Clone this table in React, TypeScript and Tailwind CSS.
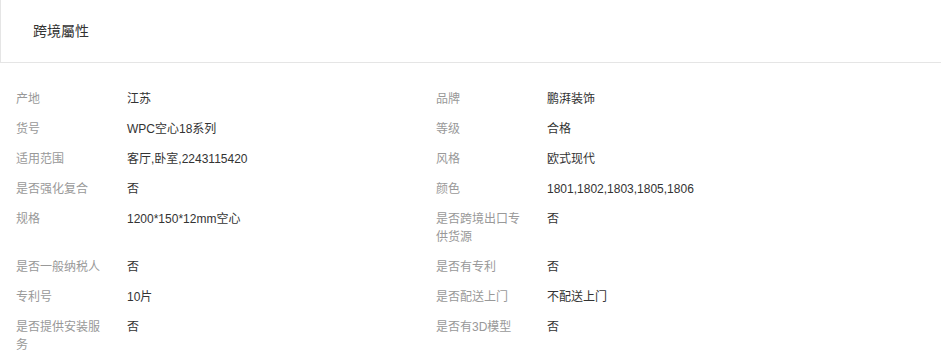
const rows: [string, string][] = [
  ["产地", "江苏"],
  ["品牌", "鹏湃装饰"],
  ["货号", "WPC空心18系列"],
  ["等级", "合格"],
  ["适用范围", "客厅,卧室,2243115420"],
  ["风格", "欧式现代"],
  ["是否强化复合", "否"],
  ["颜色", "1801,1802,1803,1805,1806"],
  ["规格", "1200*150*12mm空心"],
  ["是否跨境出口专供货源", "否"],
  ["是否一般纳税人", "否"],
  ["是否有专利", "否"],
  ["专利号", "10片"],
  ["是否配送上门", "不配送上门"],
  ["是否提供安装服务", "否"],
  ["是否有3D模型", "否"],
];

export default function App() {
  return (
    <div
      className="w-[941px] h-[358px] bg-white overflow-hidden"
      style={{ fontFamily: '"Liberation Sans", "Noto Sans CJK SC", sans-serif' }}
    >
      <div className="h-[63px] border-l border-b border-[#e5e5e5] flex items-center pl-[32px]">
        <span className="text-[14px] text-[#333]">跨境屬性</span>
      </div>
      <div className="grid grid-cols-[420px_420px] px-[16px] pt-[21px]">
        {rows.map(([label, value]) => (
          <div key={label} className="flex py-[6px] text-[12px] leading-[18px]">
            <div className="w-[92px] mr-[19px] text-[#999]">{label}</div>
            <div className="text-[#333]">{value}</div>
          </div>
        ))}
      </div>
    </div>
  );
}
